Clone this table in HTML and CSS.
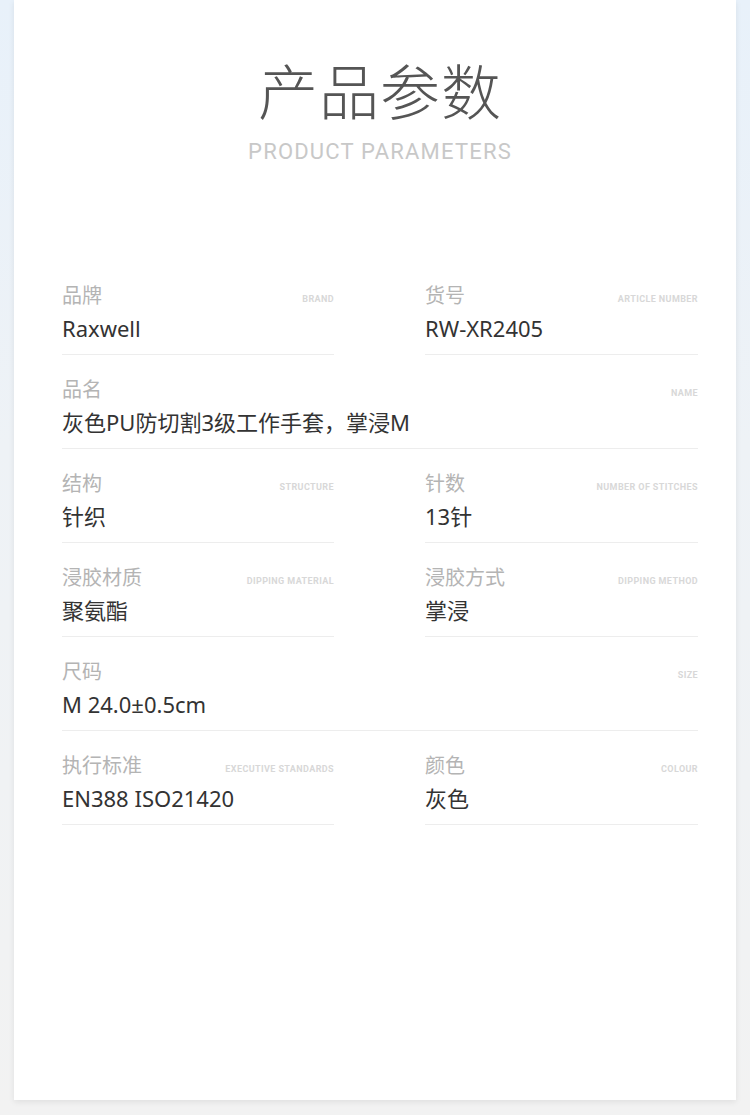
FILE: index.html
```html
<!DOCTYPE html>
<html lang="zh-CN">
<head>
    <meta charset="UTF-8">
    <meta name="viewport" content="width=device-width, initial-scale=1.0">
    <title>产品参数</title>
    <link rel="stylesheet" href="styles.css">
</head>
<body>

<div class="card">
    <div class="head">
        <h1>产品参数</h1>
        <p class="sub">PRODUCT PARAMETERS</p>
    </div>

    <div class="params">
        <div class="item">
            <div class="top"><span class="label">品牌</span><span class="en">BRAND</span></div>
            <div class="value">Raxwell</div>
        </div>
        <div class="item">
            <div class="top"><span class="label">货号</span><span class="en">ARTICLE NUMBER</span></div>
            <div class="value">RW-XR2405</div>
        </div>
        <div class="item wide">
            <div class="top"><span class="label">品名</span><span class="en">NAME</span></div>
            <div class="value">灰色PU防切割3级工作手套，掌浸M</div>
        </div>
        <div class="item">
            <div class="top"><span class="label">结构</span><span class="en">STRUCTURE</span></div>
            <div class="value">针织</div>
        </div>
        <div class="item">
            <div class="top"><span class="label">针数</span><span class="en">NUMBER OF STITCHES</span></div>
            <div class="value">13针</div>
        </div>
        <div class="item">
            <div class="top"><span class="label">浸胶材质</span><span class="en">DIPPING MATERIAL</span></div>
            <div class="value">聚氨酯</div>
        </div>
        <div class="item">
            <div class="top"><span class="label">浸胶方式</span><span class="en">DIPPING METHOD</span></div>
            <div class="value">掌浸</div>
        </div>
        <div class="item wide">
            <div class="top"><span class="label">尺码</span><span class="en">SIZE</span></div>
            <div class="value">M 24.0±0.5cm</div>
        </div>
        <div class="item">
            <div class="top"><span class="label">执行标准</span><span class="en">EXECUTIVE STANDARDS</span></div>
            <div class="value">EN388 ISO21420</div>
        </div>
        <div class="item">
            <div class="top"><span class="label">颜色</span><span class="en">COLOUR</span></div>
            <div class="value">灰色</div>
        </div>
    </div>
</div>

</body>
</html>
```

FILE: styles.css
```css
body {
    margin: 0;
    padding: 0 14px;
    height: 1115px;
    overflow: hidden;
    font-family: "Noto Sans", "Noto Sans CJK SC", sans-serif;
    background: linear-gradient(180deg, #e8f1fa 0%, #eef2f6 40%, #f2f2f2 100%);
}
.card {
    height: 1100px;
    background-color: #fff;
    box-shadow: 0 2px 6px rgba(0, 0, 0, 0.08);
    padding: 0 38px 0 48px;
    box-sizing: border-box;
}
.head {
    padding-top: 54px;
    text-align: center;
}
.head h1 {
    margin: 0;
    font-family: "Noto Sans CJK SC", sans-serif;
    font-weight: 300;
    font-size: 60px;
    line-height: 70px;
    color: #555;
    letter-spacing: 1px;
}
.sub {
    margin: 15px 0 0;
    font-family: "Roboto", "Liberation Sans", sans-serif;
    font-size: 22px;
    line-height: 26px;
    color: #c8c8c8;
    letter-spacing: 1.2px;
}
.params {
    margin-top: 96px;
    display: grid;
    grid-template-columns: 272px 273px;
    column-gap: 91px;
}
.item {
    padding: 23px 0 14px;
    border-bottom: 1px solid #ededed;
}
.wide {
    grid-column: 1 / 3;
}
.top {
    display: flex;
    justify-content: space-between;
    align-items: center;
    height: 24px;
}
.label {
    font-size: 20px;
    line-height: 24px;
    color: #b4b4b4;
}
.en {
    font-family: "Roboto", "Liberation Sans", sans-serif;
    font-weight: 700;
    font-size: 9px;
    color: #d8d8d8;
    letter-spacing: 0.4px;
    padding-top: 6px;
}
.value {
    margin-top: 8px;
    font-size: 22px;
    line-height: 24px;
    color: #333;
}
```
